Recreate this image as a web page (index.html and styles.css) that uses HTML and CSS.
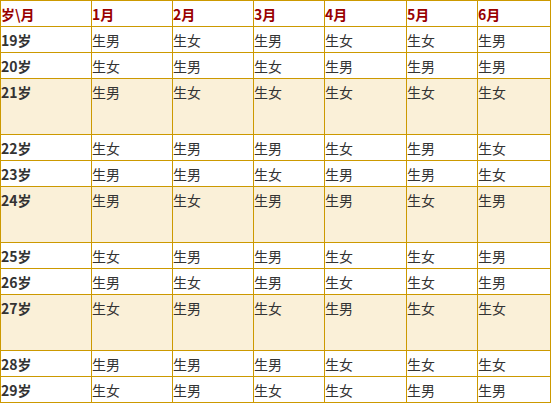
FILE: index.html
```html
<!DOCTYPE html>
<html lang="zh">
<head>
<meta charset="utf-8">
<link rel="stylesheet" href="styles.css">
</head>
<body>
<table class="chart">
  <colgroup>
    <col class="c0"><col class="c1"><col class="c2"><col class="c3"><col class="c4"><col class="c5"><col class="c6">
  </colgroup>
  <tr class="head"><th>岁\月</th><th>1月</th><th>2月</th><th>3月</th><th>4月</th><th>5月</th><th>6月</th></tr>
  <tr><th>19岁</th><td>生男</td><td>生女</td><td>生男</td><td>生女</td><td>生女</td><td>生男</td></tr>
  <tr><th>20岁</th><td>生女</td><td>生男</td><td>生女</td><td>生男</td><td>生男</td><td>生男</td></tr>
  <tr class="tall"><th>21岁</th><td>生男</td><td>生女</td><td>生女</td><td>生女</td><td>生女</td><td>生女</td></tr>
  <tr><th>22岁</th><td>生女</td><td>生男</td><td>生男</td><td>生女</td><td>生男</td><td>生女</td></tr>
  <tr><th>23岁</th><td>生男</td><td>生男</td><td>生女</td><td>生男</td><td>生男</td><td>生女</td></tr>
  <tr class="tall"><th>24岁</th><td>生男</td><td>生女</td><td>生男</td><td>生男</td><td>生女</td><td>生男</td></tr>
  <tr><th>25岁</th><td>生女</td><td>生男</td><td>生男</td><td>生女</td><td>生女</td><td>生男</td></tr>
  <tr><th>26岁</th><td>生男</td><td>生女</td><td>生男</td><td>生女</td><td>生女</td><td>生男</td></tr>
  <tr class="tall"><th>27岁</th><td>生女</td><td>生男</td><td>生女</td><td>生男</td><td>生女</td><td>生女</td></tr>
  <tr><th>28岁</th><td>生男</td><td>生男</td><td>生男</td><td>生女</td><td>生女</td><td>生女</td></tr>
  <tr><th>29岁</th><td>生女</td><td>生男</td><td>生女</td><td>生女</td><td>生男</td><td>生男</td></tr>
</table>
</body>
</html>
```
FILE: styles.css
```css
html, body {
  margin: 0;
  padding: 0;
  background: #fff;
}
.chart {
  border-collapse: collapse;
  table-layout: fixed;
  width: 550px;
  font-family: "Noto Sans CJK SC", "Microsoft YaHei", sans-serif;
  font-size: 14px;
  color: #333;
}
.c0 { width: 91px; }
.c1 { width: 81px; }
.c2 { width: 81px; }
.c3 { width: 71px; }
.c4 { width: 82px; }
.c5 { width: 71px; }
.c6 { width: 73px; }
.chart th, .chart td {
  border: 1px solid #cc9900;
  height: 26px;
  padding: 3px 0 0 0;
  box-sizing: border-box;
  vertical-align: top;
  text-align: left;
  line-height: 20px;
}
.chart th {
  font-weight: bold;
  color: #333;
}
.chart td {
  font-weight: normal;
}
.head th {
  color: #990000;
}
.tall th, .tall td {
  height: 56px;
  background: #faf0d8;
}
```
